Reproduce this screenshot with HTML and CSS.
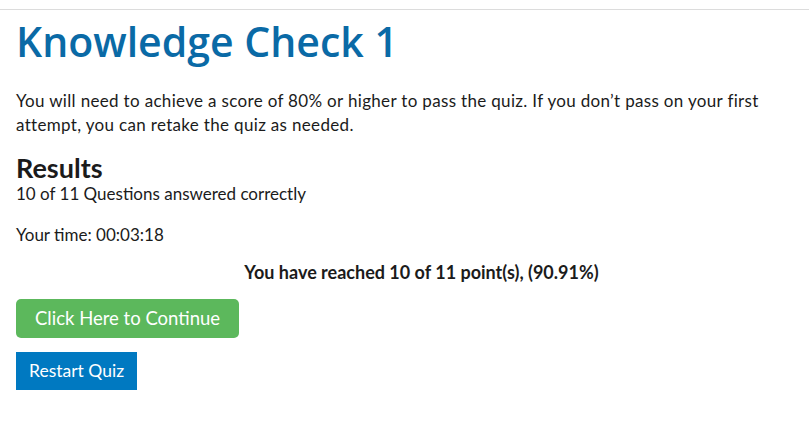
FILE: index.html
```html
<!DOCTYPE html>
<html>
<head>
<meta charset="utf-8">
<link rel="stylesheet" href="styles.css">
</head>
<body>
<div class="topline"></div>
<main class="content">
  <h1 class="title">Knowledge Check 1</h1>
  <p class="intro">You will need to achieve a score of 80% or higher to pass the quiz. If you don’t pass on your first attempt, you can retake the quiz as needed.</p>
  <h2 class="results-title">Results</h2>
  <p class="answered">10 of 11 Questions answered correctly</p>
  <p class="time">Your time: 00:03:18</p>
  <p class="points">You have reached 10 of 11 point(s), (90.91%)</p>
  <div class="actions">
    <a class="btn btn-continue">Click Here to Continue</a>
    <a class="btn btn-restart">Restart Quiz</a>
  </div>
</main>
</body>
</html>
```
FILE: styles.css
```css
html, body { margin: 0; padding: 0; background: #fff; }
body { font-family: Lato, "Open Sans", sans-serif; color: #1b1b1b; }
.topline { margin-top: 9px; height: 1px; background: #dcdcdc; }
.content { padding: 0 16px; }
.title {
  font-family: "Open Sans", sans-serif;
  font-weight: 600;
  font-size: 41px;
  line-height: 56px;
  color: #0a6aa6;
  margin: 3px 0 20px;
}
.intro { font-size: 17px; line-height: 24px; margin: 0 0 15px; max-width: 765px; letter-spacing: 0.33px; }
.results-title { font-size: 27px; font-weight: 700; line-height: 32px; margin: 0; }
.answered { font-size: 17px; line-height: 20px; margin: 0 0 21px; }
.time { font-size: 17px; line-height: 20px; margin: 0 0 16px; }
.points { font-size: 18px; font-weight: 700; text-align: center; margin: 0 0 16px; padding-left: 34px; line-height: 22px; }
.actions { display: flex; flex-direction: column; align-items: flex-start; gap: 14px; }
.btn { color: #fff; display: inline-block; }
.btn-continue { background: #5cb85c; border-radius: 5px; font-size: 18.5px; padding: 0 19px; line-height: 39px; }
.btn-restart { background: #0079c1; font-size: 17.5px; padding: 0 13px; line-height: 38px; }
```
